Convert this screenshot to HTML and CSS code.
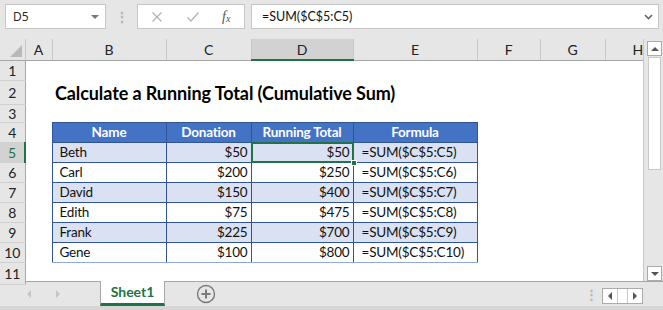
FILE: index.html
```html
<!DOCTYPE html>
<html lang="en">
<head>
  <meta charset="UTF-8" />
  <title>Running Total</title>
  <link rel="stylesheet" href="styles.css">
</head>
<body>
  <div class="toolbar">
    <div class="name-box">
      <span>D5</span>
      <span class="caret"></span>
    </div>
    <div class="grip">⋮</div>
    <div class="fx-buttons">
      <svg class="btn-x" width="12" height="12" viewBox="0 0 12 12"><path d="M1.5 1.5 L10.5 10.5 M10.5 1.5 L1.5 10.5" stroke="#b4b4b4" stroke-width="1.3" fill="none"/></svg>
      <svg class="btn-ok" width="14" height="12" viewBox="0 0 14 12"><path d="M1.5 6.5 L5 10 L12.5 1.5" stroke="#b4b4b4" stroke-width="1.4" fill="none"/></svg>
      <span class="fx">f<sub>x</sub></span>
    </div>
    <div class="formula-bar">
      <span>=SUM($C$5:C5)</span>
      <svg width="9" height="6" viewBox="0 0 9 6"><path d="M1 1 L4.5 4.5 L8 1" stroke="#666" stroke-width="1.6" fill="none"/></svg>
    </div>
  </div>

  <div class="main">
    <table class="sheet">
      <colgroup>
        <col class="w-rh"><col class="w-a"><col class="w-b"><col class="w-c"><col class="w-d">
        <col class="w-e"><col class="w-f"><col class="w-g"><col class="w-h">
      </colgroup>
      <tr class="col-heads">
        <th class="corner"><span class="tri"></span></th>
        <th>A</th><th>B</th><th>C</th><th class="active">D</th><th>E</th><th>F</th><th>G</th><th class="clip">H</th>
      </tr>
      <tr class="r-std"><th class="rh">1</th><td></td><td></td><td></td><td></td><td></td><td></td><td></td><td></td></tr>
      <tr class="r-title"><th class="rh">2</th><td></td><td class="title" colspan="7">Calculate a Running Total (Cumulative Sum)</td></tr>
      <tr class="r-small"><th class="rh">3</th><td></td><td></td><td></td><td></td><td></td><td></td><td></td><td></td></tr>
      <tr class="r-std"><th class="rh">4</th><td></td>
        <td class="t-head">Name</td><td class="t-head">Donation</td><td class="t-head">Running Total</td><td class="t-head">Formula</td>
        <td></td><td></td><td></td></tr>
      <tr class="r-std band"><th class="rh active">5</th><td></td>
        <td class="t name">Beth</td><td class="t num">$50</td><td class="t num selected">$50<span class="handle"></span></td><td class="t fml">=SUM($C$5:C5)</td>
        <td></td><td></td><td></td></tr>
      <tr class="r-std"><th class="rh">6</th><td></td>
        <td class="t name">Carl</td><td class="t num">$200</td><td class="t num">$250</td><td class="t fml">=SUM($C$5:C6)</td>
        <td></td><td></td><td></td></tr>
      <tr class="r-std band"><th class="rh">7</th><td></td>
        <td class="t name">David</td><td class="t num">$150</td><td class="t num">$400</td><td class="t fml">=SUM($C$5:C7)</td>
        <td></td><td></td><td></td></tr>
      <tr class="r-std"><th class="rh">8</th><td></td>
        <td class="t name">Edith</td><td class="t num">$75</td><td class="t num">$475</td><td class="t fml">=SUM($C$5:C8)</td>
        <td></td><td></td><td></td></tr>
      <tr class="r-std band"><th class="rh">9</th><td></td>
        <td class="t name">Frank</td><td class="t num">$225</td><td class="t num">$700</td><td class="t fml">=SUM($C$5:C9)</td>
        <td></td><td></td><td></td></tr>
      <tr class="r-std last"><th class="rh">10</th><td></td>
        <td class="t name">Gene</td><td class="t num">$100</td><td class="t num">$800</td><td class="t fml">=SUM($C$5:C10)</td>
        <td></td><td></td><td></td></tr>
      <tr class="r-end"><th class="rh">11</th><td></td><td></td><td></td><td></td><td></td><td></td><td></td><td></td></tr>
    </table>

    <div class="vscroll">
      <div class="sb-btn"><span class="arr-up"></span></div>
      <div class="sb-thumb"></div>
      <div class="sb-track"></div>
      <div class="sb-btn"><span class="arr-down"></span></div>
    </div>
  </div>

  <div class="tabs">
    <div class="tab-nav">
      <span class="arr-left dim"></span>
      <span class="arr-right dim"></span>
    </div>
    <div class="tab">Sheet1</div>
    <div class="add-sheet">
      <svg width="20" height="20" viewBox="0 0 20 20"><circle cx="10" cy="10" r="8.5" stroke="#7a7a7a" stroke-width="1.4" fill="none"/><path d="M10 5.5 V14.5 M5.5 10 H14.5" stroke="#7a7a7a" stroke-width="2"/></svg>
    </div>
    <div class="tabs-fill"></div>
    <div class="grip small">⋮</div>
    <div class="hscroll">
      <div class="hs-btn"><span class="arr-left"></span></div>
      <div class="hs-thumb"></div>
      <div class="hs-btn"><span class="arr-right"></span></div>
    </div>
  </div>
</body>
</html>
```

FILE: styles.css
```css
* {
  margin: 0; padding: 0; box-sizing: border-box;
}

body {
  width: 663px;
  height: 310px;
  overflow: hidden;
  background: #e6e6e6;
  font-family: 'Lato', 'Liberation Sans', sans-serif;
  color: #000;
}

/* formula bar row */
.toolbar {
  height: 39px;
  display: flex;
  align-items: flex-start;
  padding: 4px 4px 0 5px;
}

.name-box {
  width: 101px;
  height: 25px;
  background: #fff;
  border: 1px solid #c6c6c6;
  display: flex;
  align-items: center;
  justify-content: space-between;
  padding: 0 6px 0 7px;
  font-family: 'Open Sans', sans-serif;
  font-size: 12px;
  color: #222;
}

.caret {
  width: 0; height: 0;
  border-left: 4px solid transparent;
  border-right: 4px solid transparent;
  border-top: 4px solid #777;
}

.grip {
  width: 31px;
  height: 25px;
  line-height: 25px;
  text-align: center;
  color: #b4b4b4;
  font-size: 14px;
  font-weight: bold;
}

.fx-buttons {
  width: 108px;
  height: 25px;
  background: #fff;
  border: 1px solid #c6c6c6;
  display: flex;
  align-items: center;
  padding-left: 13px;
}

.btn-x { margin-right: 23px; }
.btn-ok { margin-right: 22px; }

.fx {
  font-family: 'Liberation Serif', serif;
  font-style: italic;
  font-size: 14px;
  color: #555;
  line-height: 1;
}

.fx sub {
  font-size: 10px;
  vertical-align: -1px;
}

.formula-bar {
  flex: 1;
  margin-left: 6px;
  height: 25px;
  background: #fff;
  border: 1px solid #c6c6c6;
  display: flex;
  align-items: center;
  justify-content: space-between;
  padding: 0 5px 0 10px;
  font-size: 12.5px;
  color: #111;
}

/* grid */
.main {
  display: flex;
  height: 242px;
  background: #fff;
}

.sheet {
  width: 643px;
  table-layout: fixed;
  border-collapse: collapse;
  font-size: 13.5px;
  letter-spacing: -0.2px;
}

.w-rh { width: 25px; }
.w-a { width: 27px; }
.w-b { width: 114px; }
.w-c { width: 85px; }
.w-d { width: 102px; }
.w-e { width: 124px; }
.w-f { width: 63px; }
.w-g { width: 65px; }
.w-h { width: 38px; }

.sheet td, .sheet th {
  padding: 0;
  white-space: nowrap;
  overflow: hidden;
}

.col-heads { height: 21px; }

.col-heads th {
  background: #e6e6e6;
  border-left: 1px solid #c8c8c8;
  border-bottom: 1px solid #a6a6a6;
  font-weight: normal;
  font-size: 14px;
  color: #222;
  text-align: center;
}

.col-heads th.active {
  background: #d2d2d2;
  border-bottom: 2px solid #217346;
}

.col-heads th.clip {
  text-align: left;
  padding-left: 27px;
}

.corner {
  position: relative;
  border-left: none !important;
}

.tri {
  position: absolute;
  right: 3px; bottom: 3px;
  width: 0; height: 0;
  border-left: 12px solid transparent;
  border-bottom: 12px solid #b9b9b9;
}

.rh {
  background: #e6e6e6;
  border-right: 1px solid #a6a6a6;
  border-bottom: 1px solid #d0d0d0;
  font-weight: normal;
  font-size: 14px;
  color: #222;
  text-align: center;
}

.rh.active {
  background: #d2d2d2;
  border-right: 2px solid #217346;
  color: #217346;
}

.r-std { height: 20px; }
.r-title { height: 24px; }
.r-small { height: 14px; }
.r-end { height: 22px; }

.title {
  font-weight: bold;
  font-size: 18px;
  letter-spacing: -0.1px;
  padding-left: 3px !important;
  vertical-align: bottom;
}

.t-head {
  background: #4472c4;
  color: #fff;
  font-weight: bold;
  text-align: center;
  border: 1px solid #2f5597;
}

.t {
  border: 1px solid #2f5597;
  color: #111;
}

.band .t { background: #d9e1f2; }

.last .t { border-bottom-color: #8ea9db; }

.name { padding-left: 7px !important; }
.num { text-align: right; padding-right: 3px !important; }
.fml { padding-left: 8px !important; }

.selected {
  position: relative;
  overflow: visible !important;
}

.selected::after {
  content: "";
  position: absolute;
  inset: -1px -1px -1px -1px;
  border: 2px solid #217346;
}

.handle {
  position: absolute;
  right: -4px; bottom: -4px;
  width: 6px; height: 6px;
  background: #217346;
  border: 1px solid #fff;
  z-index: 2;
}

/* vertical scrollbar */
.vscroll {
  width: 20px;
  display: flex;
  flex-direction: column;
  background: #e6e6e6;
  border-left: 1px solid #c8c8c8;
  padding: 2px 1px 0 3px;
}

.sb-btn {
  height: 15px;
  background: #fff;
  border: 1px solid #ababab;
  display: flex;
  align-items: center;
  justify-content: center;
}

.sb-thumb {
  height: 113px;
  background: #fff;
  border: 1px solid #c8c8c8;
  margin: 1px 1px 0;
}

.sb-track { flex: 1; }

.arr-up, .arr-down {
  width: 0; height: 0;
  border-left: 4px solid transparent;
  border-right: 4px solid transparent;
}

.arr-up { border-bottom: 4px solid #555; }
.arr-down { border-top: 4px solid #555; }

/* sheet tabs */
.tabs {
  height: 29px;
  display: flex;
  border-top: 1px solid #a6a6a6;
  border-bottom: 4px solid #d6d6d6;
}

.tab-nav {
  width: 100px;
  display: flex;
  align-items: center;
  padding-left: 27px;
  gap: 25px;
}

.arr-left, .arr-right {
  width: 0; height: 0;
  border-top: 4px solid transparent;
  border-bottom: 4px solid transparent;
}

.arr-left { border-right: 4px solid #555; }
.arr-right { border-left: 4px solid #555; }

.arr-left.dim { border-right-color: #c4c4c4; }
.arr-right.dim { border-left-color: #c4c4c4; }

.tab {
  width: 65px;
  margin-top: -1px;
  background: #fff;
  border-left: 1px solid #a6a6a6;
  border-right: 1px solid #a6a6a6;
  border-bottom: 3px solid #217346;
  color: #217346;
  font-weight: bold;
  font-size: 14px;
  text-align: center;
  line-height: 22px;
}

.add-sheet {
  width: 82px;
  display: flex;
  align-items: center;
  justify-content: center;
}

.tabs-fill { flex: 1; }

.grip.small {
  width: 22px;
  height: auto;
  line-height: 24px;
  font-size: 13px;
}

.hscroll {
  width: 41px;
  height: 16px;
  margin: 6px 20px 0 0;
  display: flex;
  background: #fff;
  border: 1px solid #ababab;
}

.hs-btn {
  width: 14px;
  display: flex;
  align-items: center;
  justify-content: center;
}

.hs-thumb {
  flex: 1;
  border-left: 1px solid #c8c8c8;
  border-right: 1px solid #c8c8c8;
}
```
